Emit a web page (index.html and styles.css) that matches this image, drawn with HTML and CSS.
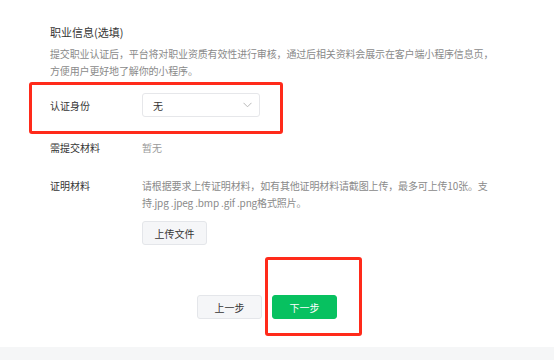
FILE: index.html
```html
<!DOCTYPE html>
<html lang="zh-CN">
<head>
<meta charset="utf-8">
<link rel="stylesheet" href="styles.css">
</head>
<body>
<div class="page">
  <div class="title">职业信息(选填)</div>
  <div class="desc">提交职业认证后，平台将对职业资质有效性进行审核，通过后相关资料会展示在客户端小程序信息页，<br>方便用户更好地了解你的小程序。</div>

  <div class="row row-id">
    <div class="label">认证身份</div>
    <div class="select">
      <span>无</span>
      <svg class="chev" width="9" height="6" viewBox="0 0 9 6"><path d="M0.5 0.8 L4.5 4.8 L8.5 0.8" fill="none" stroke="#b8b8b8" stroke-width="1"/></svg>
    </div>
  </div>

  <div class="row row-need">
    <div class="label">需提交材料</div>
    <div class="value muted">暂无</div>
  </div>

  <div class="row row-proof">
    <div class="label">证明材料</div>
    <div class="proof">
      <div class="proof-desc">请根据要求上传证明材料，如有其他证明材料请截图上传，最多可上传10张。支<br>持.jpg .jpeg .bmp .gif .png格式照片。</div>
      <button class="btn btn-default upload">上传文件</button>
    </div>
  </div>

  <div class="actions">
    <button class="btn btn-default">上一步</button>
    <button class="btn btn-primary">下一步</button>
  </div>

  <div class="mark mark-id"></div>
  <div class="mark mark-next"></div>
</div>
<div class="footer"></div>
</body>
</html>
```

FILE: styles.css
```css
* { box-sizing: border-box; }
html, body { margin: 0; padding: 0; background: #fff; }
body {
  font-family: "Noto Sans CJK SC", "Noto Sans", sans-serif;
  color: #353535;
  width: 554px;
  height: 360px;
  overflow: hidden;
}
.page {
  position: relative;
  height: 347px;
  padding: 24px 0 0 50px;
}
.title {
  font-size: 11px;
  line-height: 16px;
  color: #353535;
}
.desc {
  margin-top: 5px;
  font-size: 10px;
  line-height: 17px;
  color: #8a8a8a;
  letter-spacing: -0.15px;
}
.row {
  display: flex;
  align-items: center;
}
.label {
  width: 92px;
  flex: none;
  font-size: 10px;
  color: #353535;
}
.row-id { margin-top: 14px; height: 24px; }
.select {
  width: 118px;
  height: 24px;
  border: 1px solid #e6e7ea;
  border-radius: 3px;
  display: flex;
  align-items: center;
  justify-content: space-between;
  padding: 0 7px 0 10px;
  font-size: 10px;
  color: #353535;
}
.chev { display: block; }
.row-need { margin-top: 22px; height: 16px; }
.value { font-size: 10px; }
.muted { color: #9a9a9a; }
.row-proof { margin-top: 22px; align-items: flex-start; }
.row-proof .label { line-height: 17px; }
.proof-desc {
  font-size: 10px;
  line-height: 17px;
  color: #8a8a8a;
  letter-spacing: -0.15px;
}
.btn {
  font-family: inherit;
  font-size: 10px;
  height: 24px;
  width: 65px;
  border-radius: 3px;
  padding: 0;
  cursor: pointer;
}
.btn-default {
  background: #f5f6f8;
  border: 1px solid #e4e6ea;
  color: #353535;
}
.btn-primary {
  background: #07c160;
  border: 1px solid #07c160;
  color: #fff;
}
.upload { margin-top: 10px; display: block; }
.actions {
  margin-top: 50px;
  padding-left: 147px;
  display: flex;
  gap: 10px;
}
.actions .btn { width: 65px; }
.mark {
  position: absolute;
  border: 3px solid #ff2a1a;
  border-radius: 3px;
}
.mark-id { left: 29px; top: 82px; width: 254px; height: 52px; }
.mark-next { left: 265px; top: 257px; width: 97px; height: 79px; }
.footer {
  height: 13px;
  background: #f5f6f7;
}
```
